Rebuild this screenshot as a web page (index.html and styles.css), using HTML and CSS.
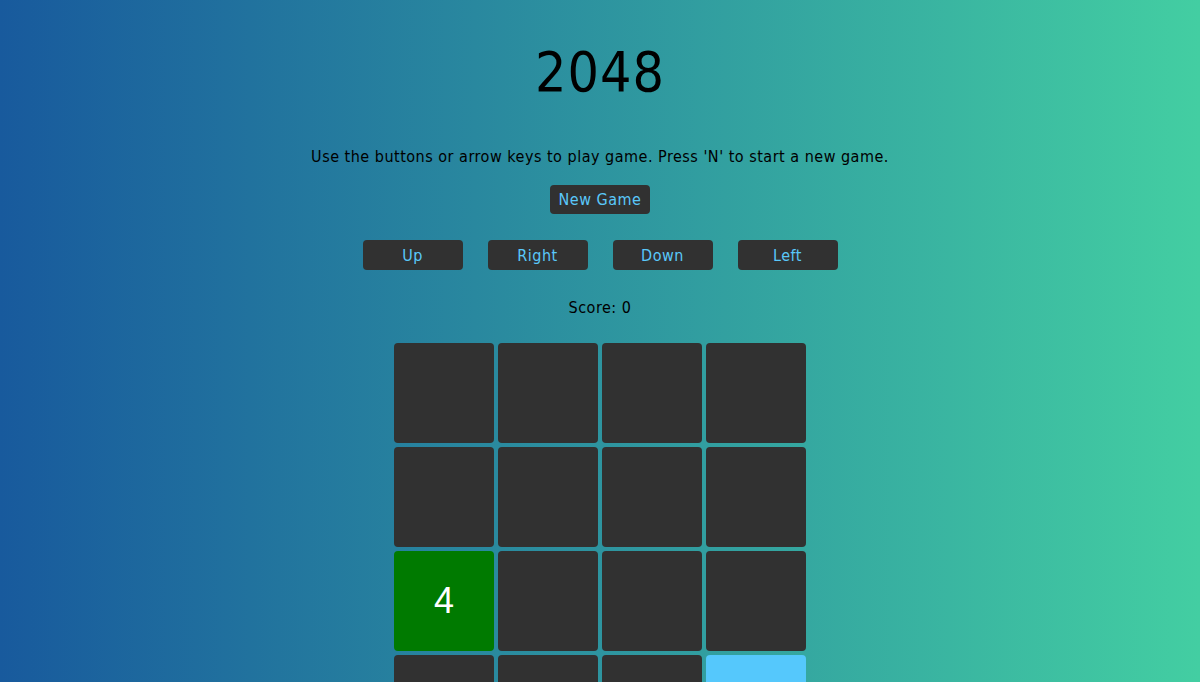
FILE: index.html
```html
<!DOCTYPE html>
<html>
<head>
<meta charset="utf-8">
<link rel="stylesheet" href="styles.css">
</head>
<body>
<div class="app">
  <h1 class="title">2048</h1>
  <p class="instructions">Use the buttons or arrow keys to play game. Press 'N' to start a new game.</p>
  <button class="btn btn-new">New Game</button>
  <div class="controls">
    <button class="btn btn-dir">Up</button>
    <button class="btn btn-dir">Right</button>
    <button class="btn btn-dir">Down</button>
    <button class="btn btn-dir">Left</button>
  </div>
  <div class="score">Score: 0</div>
  <div class="grid">
    <div class="tile"></div><div class="tile"></div><div class="tile"></div><div class="tile"></div>
    <div class="tile"></div><div class="tile"></div><div class="tile"></div><div class="tile"></div>
    <div class="tile tile-4">4</div><div class="tile"></div><div class="tile"></div><div class="tile"></div>
    <div class="tile"></div><div class="tile"></div><div class="tile"></div><div class="tile tile-2"></div>
  </div>
</div>
</body>
</html>
```
FILE: styles.css
```css
html, body {
  margin: 0;
  padding: 0;
  height: 100%;
  overflow: hidden;
}
body {
  background: linear-gradient(to right, #185a9d, #43cea2);
  font-family: "DejaVu Sans Condensed", "DejaVu Sans", sans-serif;
  color: #000;
}
.app {
  display: flex;
  flex-direction: column;
  align-items: center;
  padding-top: 40px;
}
.title {
  margin: 0;
  font-size: 55px;
  font-weight: normal;
  line-height: 64px;
  letter-spacing: 1px;
}
.instructions {
  margin: 41px 0 0;
  font-size: 16px;
  line-height: 24px;
  letter-spacing: 0.5px;
}
.btn {
  background: #313131;
  color: #5ac8fa;
  border: none;
  border-radius: 4px;
  font-family: "DejaVu Sans Condensed", "DejaVu Sans", sans-serif;
  font-size: 16px;
  letter-spacing: 0.5px;
  padding: 0;
}
.btn-new {
  margin-top: 16px;
  width: 100px;
  height: 29px;
}
.controls {
  display: flex;
  gap: 25px;
  margin-top: 26px;
}
.btn-dir {
  width: 100px;
  height: 30px;
}
.score {
  margin-top: 28px;
  font-size: 16px;
  line-height: 20px;
  letter-spacing: 0.5px;
}
.grid {
  margin-top: 25px;
  display: grid;
  grid-template-columns: repeat(4, 100px);
  grid-auto-rows: 100px;
  gap: 4px;
}
.tile {
  background: #313131;
  border-radius: 4px;
  display: flex;
  align-items: center;
  justify-content: center;
  color: #fff;
  font-family: "Liberation Sans", Arial, sans-serif;
  font-size: 36px;
}
.tile-4 {
  background: #007a00;
}
.tile-2 {
  background: #55c8fc;
}
```
